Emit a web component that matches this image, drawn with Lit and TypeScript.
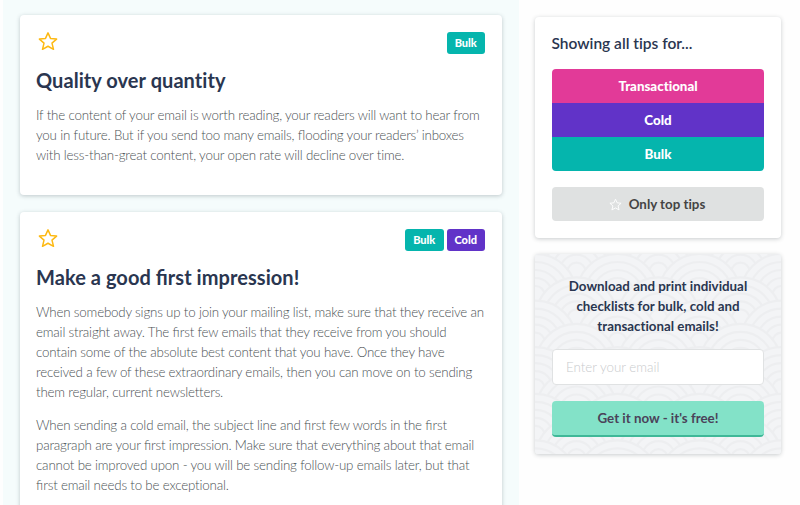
import { LitElement, html, css, svg } from "lit";
import { customElement, property } from "lit/decorators.js";

const star = svg`<path d="M12 2.2 15 8.9 22.3 9.7 16.8 14.6 18.6 22 12 18.3 5.4 22 7.2 14.6 1.7 9.7 9 8.9Z"/>`;

// Only the f-ligatures are wanted; everything else is tracked letter by letter.
const joined = (text: string) =>
  text.split(/(fi|fl)/).map((part) => (part === "fi" || part === "fl" ? html`<span class="lig">${part}</span>` : part));

@customElement("tip-card")
class TipCard extends LitElement {
  @property() heading = "";
  @property({ attribute: false }) tags: string[] = [];
  @property({ attribute: false }) paragraphs: string[] = [];

  static styles = css`
    :host { display: block; background: #fff; border-radius: 4px; box-shadow: 0 1px 4px rgba(40, 60, 70, 0.27); padding: 16px 17px 16px; box-sizing: border-box; font-variant-ligatures: none; }
    .top { display: flex; justify-content: space-between; align-items: flex-start; height: 24px; }
    .star { width: 20px; height: 20px; margin: 0 0 0 1px; fill: none; stroke: #fdb913; stroke-width: 1.8; stroke-linejoin: round; }
    .tags { display: flex; gap: 3px; margin-top: 1px; }
    .tag { height: 22px; line-height: 22px; width: 38.5px; text-align: center; border-radius: 3px; color: #fff; font-size: 11px; font-weight: 900; }
    .bulk { background: #05b5ad; }
    .cold { background: #6133c8; }
    h2 { margin: 10px 0 10px -1px; font-size: 20px; line-height: 30px; font-weight: 700; color: #2a3650; letter-spacing: 0.06px; }
    p { margin: 0 0 13px -1px; font-size: 13.33px; line-height: 20px; font-weight: 300; letter-spacing: -0.18px; color: #4c5255; white-space: pre; }
    .lig { font-variant-ligatures: common-ligatures; font-feature-settings: "liga" 1; letter-spacing: 0; }
  `;

  render() {
    return html`
      <div class="top">
        <svg class="star" viewBox="0 0 24 24">${star}</svg>
        <div class="tags">${this.tags.map((t) => html`<span class="tag ${t.toLowerCase()}">${t}</span>`)}</div>
      </div>
      <h2>${joined(this.heading)}</h2>
      ${this.paragraphs.map((p) => html`<p>${joined(p)}</p>`)}
    `;
  }
}

// Overlapping fish-scale waves: each lower scale covers the ones behind it.
const SCALE_WIDTH = 82;
const SCALE_PITCH = 23.3;
const RADII = [41, 33, 25, 17, 9];
const scales: unknown[] = [];
for (let row = -4; row < 10; row++) {
  for (let col = -1; col < 4; col++) {
    const x = 0.5 + col * SCALE_WIDTH + (row % 2 === 0 ? 0 : SCALE_WIDTH / 2);
    const y = 41 + row * SCALE_PITCH;
    scales.push(svg`<g transform="translate(${x} ${y})">${RADII.map((r) => svg`<circle class="ring" r=${r}/>`)}</g>`);
  }
}

@customElement("app-root")
class AppRoot extends LitElement {
  static styles = css`
    :host { display: block; height: 505px; overflow: hidden; background: #fefefe; font-family: Lato, sans-serif; font-variant-ligatures: none; }
    .page { display: flex; height: 505px; }
    .tips { box-sizing: border-box; width: 516px; margin-left: 3px; padding: 15px 17px 0 17px; background: #f5fcfc; display: flex; flex-direction: column; gap: 16.5px; }
    .tips tip-card { flex: none; }
    .first { height: 180px; }
    .second { height: 330px; }
    .side { width: 246px; margin: 17px 0 0 16px; display: flex; flex-direction: column; gap: 16px; }
    .panel { box-sizing: border-box; border-radius: 4px; box-shadow: 0 1px 4px rgba(40, 50, 60, 0.25); padding: 0 17px; }
    .filter { height: 221px; background: #fff; }
    h3 { margin: 0 0 0 -0.5px; padding: 16px 0 15px; line-height: 21px; font-size: 15.5px; font-weight: 600; color: #2a3650; }
    .group { border-radius: 4px; overflow: hidden; color: #fff; font-size: 13.33px; font-weight: 900; text-align: center; line-height: 34px; }
    .transactional { background: #e23a98; }
    .cold { background: #6133c8; }
    .bulk { background: #05b5ad; }
    .top-tips { box-sizing: border-box; padding-right: 2px; margin-top: 16px; height: 34px; border-radius: 4px; background: #dfe1e1; color: #444; display: flex; align-items: center; justify-content: center; gap: 7px; font-size: 13.33px; font-weight: 700; }
    .mini { width: 13px; height: 13px; fill: none; stroke: #fff; stroke-width: 1.7; stroke-linejoin: round; }
    .download { position: relative; height: 200px; background: #f3f4f6; overflow: hidden; }
    .waves { position: absolute; left: 0; top: 0; width: 246px; height: 200px; }
    .ring { fill: #f3f4f6; stroke: #edeef0; stroke-width: 2.2; }
    .form { position: relative; }
    .lead { margin: 0; padding: 22px 0 13px; text-align: center; font-size: 13.33px; line-height: 20px; font-weight: 700; color: #2a3650; white-space: pre-line; }
    input { display: block; box-sizing: border-box; width: 212px; height: 36px; margin: 0; padding: 0 13px; border: 1px solid #e0e2e3; border-radius: 4px; background: #fff; outline: none; font: 300 13.33px Lato, sans-serif; }
    input::placeholder { color: #c9cbcd; opacity: 1; }
    button { display: block; box-sizing: border-box; width: 212px; height: 36px; margin: 16px 0 0; padding: 0; border: 0; border-bottom: 2px solid #3fb898; border-radius: 4px; background: #83e2c8; color: #4a4259; font: 700 13.33px Lato, sans-serif; }
  `;

  render() {
    return html`
      <div class="page">
        <main class="tips">
          <tip-card class="first" heading="Quality over quantity" .tags=${["Bulk"]} .paragraphs=${[
            "If the content of your email is worth reading, your readers will want to hear from\nyou in future. But if you send too many emails, flooding your readers’ inboxes\nwith less-than-great content, your open rate will decline over time.",
          ]}></tip-card>
          <tip-card class="second" heading="Make a good first impression!" .tags=${["Bulk", "Cold"]} .paragraphs=${[
            "When somebody signs up to join your mailing list, make sure that they receive an\nemail straight away. The first few emails that they receive from you should\ncontain some of the absolute best content that you have. Once they have\nreceived a few of these extraordinary emails, then you can move on to sending\nthem regular, current newsletters.",
            "When sending a cold email, the subject line and first few words in the first\nparagraph are your first impression. Make sure that everything about that email\ncannot be improved upon - you will be sending follow-up emails later, but that\nfirst email needs to be exceptional.",
          ]}></tip-card>
        </main>
        <aside class="side">
          <section class="panel filter">
            <h3>Showing all tips for...</h3>
            <div class="group">
              <div class="transactional">Transactional</div>
              <div class="cold">Cold</div>
              <div class="bulk">Bulk</div>
            </div>
            <div class="top-tips"><svg class="mini" viewBox="0 0 24 24">${star}</svg><span>Only top tips</span></div>
          </section>
          <section class="panel download">
            <svg class="waves" viewBox="0 0 246 200">${scales}</svg>
            <div class="form">
              <p class="lead">${"Download and print individual\nchecklists for bulk, cold and\ntransactional emails!"}</p>
              <input placeholder="Enter your email" />
              <button>Get it now - it's free!</button>
            </div>
          </section>
        </aside>
      </div>
    `;
  }
}
